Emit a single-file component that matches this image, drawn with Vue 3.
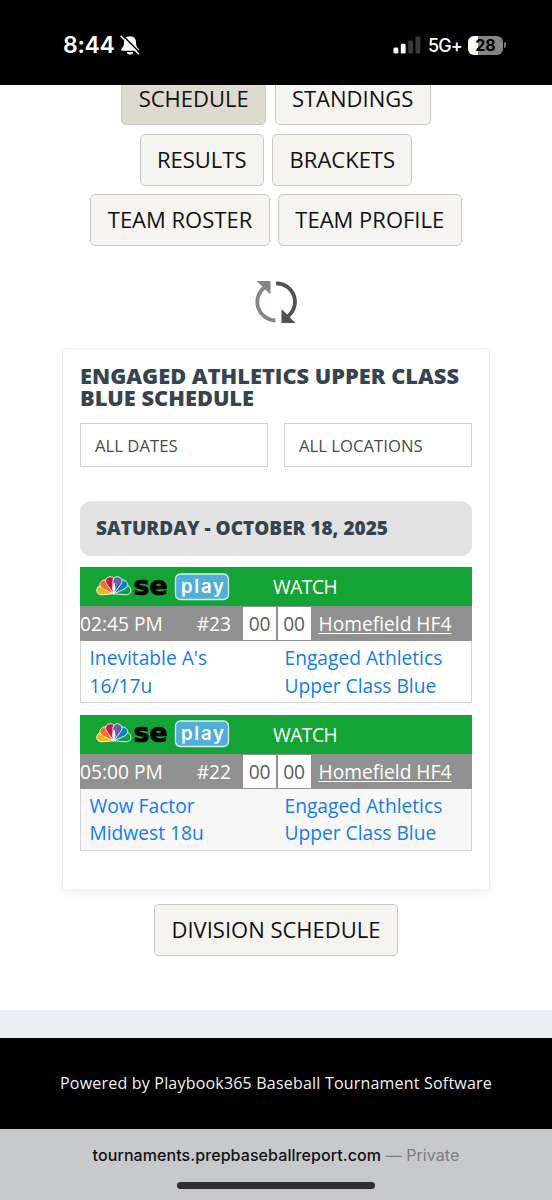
<script setup>
import { ref } from 'vue'

const navRows = ref([
  ['SCHEDULE', 'STANDINGS'],
  ['RESULTS', 'BRACKETS'],
  ['TEAM ROSTER', 'TEAM PROFILE']
])
const current = ref('SCHEDULE')

const games = ref([
  {
    time: '02:45 PM',
    number: '#23',
    score: ['00', '00'],
    field: 'Homefield HF4',
    away: ["Inevitable A's", '16/17u'],
    home: ['Engaged Athletics', 'Upper Class Blue']
  },
  {
    time: '05:00 PM',
    number: '#22',
    score: ['00', '00'],
    field: 'Homefield HF4',
    away: ['Wow Factor', 'Midwest 18u'],
    home: ['Engaged Athletics', 'Upper Class Blue']
  }
])

// peacock feathers, the outer ones are drawn first
const feathers = [
  { color: '#fbb413', angle: -74 },
  { color: '#0fa04b', angle: 74 },
  { color: '#f37021', angle: -45 },
  { color: '#0b80cb', angle: 45 },
  { color: '#ce1740', angle: -16 },
  { color: '#6460aa', angle: 16 }
]
</script>

<template>
  <div class="screen">
    <header class="status">
      <div class="clock">
        <span class="time">8:44</span>
        <svg class="bell" viewBox="0 0 20 20">
          <path d="M10 1.2C6 1.2 4 4 4 7.5C4 11.2 2.8 12.3 1.5 13.8C.6 15 1 15.8 2.4 15.8H17.6C19 15.8 19.4 15 18.5 13.8C17.2 12.3 16 11.2 16 7.5C16 4 14 1.2 10 1.2Z" fill="#fff" />
          <path d="M6.7 17H13.3C12.8 18.8 11.6 19.6 10 19.6S7.2 18.8 6.7 17Z" fill="#fff" />
          <path d="M2.2 0L20 17.8" stroke="#000" stroke-width="1.6" />
          <path d="M1 1.2L18.5 18.7" stroke="#fff" stroke-width="1.5" stroke-linecap="round" />
        </svg>
      </div>
      <div class="signals">
        <svg class="bars" viewBox="0 0 28 18">
          <rect x="0.5" y="11.5" width="4.8" height="6" rx="1.3" fill="#fff" />
          <rect x="7.8" y="7.8" width="4.8" height="9.7" rx="1.3" fill="#fff" />
          <rect x="15.2" y="4.5" width="4.8" height="13" rx="1.3" fill="#3a3a3a" />
          <rect x="22.5" y="0.5" width="4.8" height="17" rx="1.3" fill="#3a3a3a" />
        </svg>
        <span class="network">5G+</span>
        <div class="battery">28</div>
        <i class="battery-tip"></i>
      </div>
    </header>

    <main class="page">
      <nav class="nav">
        <div v-for="(row, index) in navRows" :key="index" class="nav-row">
          <button v-for="item in row" :key="item" :class="['btn', { active: item == current }]" @click="current = item">{{ item }}</button>
        </div>
      </nav>

      <svg class="refresh" viewBox="0 0 42 42">
        <path d="M20.5 39.5A18.5 18.5 0 0 1 10 6" fill="none" stroke="#85868c" stroke-width="3.8" />
        <path d="M1.5 0H15.5V13.5Z" fill="#85868c" />
        <path d="M21 2.3A18.5 18.5 0 0 1 32 36" fill="none" stroke="#515154" stroke-width="3.8" />
        <path d="M26.5 28V42H40.5Z" fill="#515154" />
      </svg>

      <section class="card">
        <h1>ENGAGED ATHLETICS UPPER CLASS<br>BLUE SCHEDULE</h1>
        <div class="filters">
          <div class="filter">ALL DATES</div>
          <div class="filter">ALL LOCATIONS</div>
        </div>
        <h2><span>SATURDAY - OCTOBER 18, 2025</span></h2>

        <article v-for="game in games" :key="game.number" class="game">
          <div class="watch">
            <svg class="logo" viewBox="0 0 136 30">
              <g transform="translate(16.8 21.8)">
                <path
                  v-for="f in feathers"
                  :key="f.color"
                  d="M0 0L-3.6 -9.5C-5.8 -14.5 -3.8 -17.5 0 -17.5S5.8 -14.500 3.6 -9.5Z"
                  :fill="f.color"
                  :transform="`rotate(${f.angle})`"
                  stroke="#fff"
                  stroke-width=".8"
                />
                <path d="M0 1.5L-1.600 -5L-.8 -10L1.5 -10.5L1.200 -9L1.600 -5Z" fill="#fff" />
              </g>
              <text class="se" x="36.5" y="23" textLength="34" lengthAdjust="spacingAndGlyphs">se</text>
              <rect x="78.5" y="2" width="53" height="25.5" rx="5" fill="#51aed8" stroke="#d9f1f5" stroke-width="1.3" />
              <text class="play" x="84" y="20.6" textLength="43">play</text>
            </svg>
            <span>WATCH</span>
          </div>
          <div class="info">
            <span class="game-time">{{ game.time }}</span>
            <span class="number">{{ game.number }}</span>
            <b v-for="(s, i) in game.score" :key="i" class="score">{{ s }}</b>
            <a class="field">{{ game.field }}</a>
          </div>
          <div class="teams">
            <a class="team"><span v-for="line in game.away" :key="line">{{ line }}</span></a>
            <a class="team"><span v-for="line in game.home" :key="line">{{ line }}</span></a>
          </div>
        </article>
      </section>

      <button class="btn division">DIVISION SCHEDULE</button>
    </main>

    <div class="strip"></div>
    <footer class="powered"><span>Powered by Playbook365 Baseball Tournament Software</span></footer>
    <div class="browser">
      <p><span class="url">tournaments.prepbaseballreport.com</span> <span class="private">— Private</span></p>
      <div class="home-bar"></div>
    </div>
  </div>
</template>

<style>
body {
  margin: 0;
  background: #fff;
}
</style>

<style scoped>
* {
  box-sizing: border-box;
}
.screen {
  width: 552px;
  height: 1200px;
  display: flex;
  flex-direction: column;
  overflow: hidden;
  background: #fff;
  font-family: 'Open Sans', sans-serif;
}
.status {
  height: 85px;
  flex: none;
  display: flex;
  justify-content: space-between;
  padding: 0 46px 0 63px;
  background: #000;
  color: #fff;
  font-family: Inter, sans-serif;
}
.clock,
.signals {
  display: flex;
  align-items: center;
  height: 90px;
}
.time {
  width: 57px;
  font-size: 23px;
  font-weight: 600;
  letter-spacing: -0.3px;
}
.bell {
  width: 20px;
  height: 20px;
}
.bars {
  width: 28px;
  height: 18px;
  margin-right: 7px;
}
.network {
  width: 40px;
  font-size: 18px;
  font-weight: 500;
  letter-spacing: -0.9px;
}
.battery {
  width: 35px;
  height: 19px;
  border-radius: 6px;
  background: linear-gradient(90deg, #fff 28%, #858585 28%);
  color: #000;
  font-size: 16px;
  font-weight: 700;
  line-height: 19px;
  text-align: center;
}
.battery-tip {
  width: 2px;
  height: 6px;
  margin-left: 1px;
  border-radius: 0 2px 2px 0;
  background: #777;
}
.page {
  height: 925px;
  flex: none;
  overflow: hidden;
  display: flex;
  flex-direction: column;
  align-items: center;
}
.nav {
  display: flex;
  flex-direction: column;
  gap: 8.5px;
  margin-top: -12px;
}
.nav-row {
  display: flex;
  justify-content: center;
  gap: 8.5px;
}
.btn {
  height: 52px;
  flex: none;
  padding: 0 16.3px 2px;
  border: 1.4px solid #cbc8c8;
  border-radius: 5px;
  background: #f6f4f1;
  color: #111;
  font: 400 22px 'Open Sans', sans-serif;
  white-space: nowrap;
}
.btn.active {
  background: #dfdad0;
}
.refresh {
  width: 42px;
  height: 42px;
  flex: none;
  margin-top: 35px;
}
.card {
  width: 428px;
  height: 543px;
  flex: none;
  margin-top: 25px;
  padding: 16px 17px 0;
  border: 1px solid #eeecee;
  border-radius: 4px;
  box-shadow: 0 5px 14px -5px #f0e9ee;
}
h1 {
  height: 44px;
  margin: 0;
  color: #36444f;
  font-size: 21.8px;
  font-weight: 800;
  line-height: 22px;
  white-space: nowrap;
}
.filters {
  display: flex;
  gap: 16px;
  margin-top: 14px;
}
.filter {
  width: 188px;
  height: 44px;
  padding-left: 14px;
  border: 1.4px solid #cdd0d4;
  color: #4b4a50;
  font-size: 16.7px;
  line-height: 43px;
}
h2 {
  height: 55px;
  margin: 34px 0 11px;
  padding-left: 16px;
  border-radius: 11px;
  background: #e3e3e3;
  color: #36444f;
  font-size: 19px;
  font-weight: 800;
  line-height: 55px;
}
.game {
  width: 392px;
  height: 136px;
  margin-bottom: 11.5px;
  font-size: 19.2px;
}
.watch {
  display: flex;
  align-items: center;
  height: 39px;
  background: #14a436;
  color: #fff;
}
.watch span {
  letter-spacing: -0.5px;
}
.logo {
  width: 136px;
  height: 30px;
  margin-left: 17px;
  margin-right: 40px;
  overflow: visible;
}
.se {
  font: 700 26px 'DejaVu Sans', sans-serif;
  fill: #000;
  stroke: #000;
  stroke-width: 0.7px;
}
.play {
  font: 600 18.5px Inter, sans-serif;
  fill: #fff;
}
.info {
  display: flex;
  align-items: center;
  height: 35px;
  background: #919191;
  color: #fff;
  white-space: nowrap;
}
.game-time {
  width: 91px;
}
.number {
  width: 60px;
  text-align: right;
}
.score {
  width: 33px;
  height: 33px;
  margin-left: 1.5px;
  background: #fff;
  color: #5b5b5b;
  font-weight: 500;
  letter-spacing: -0.2px;
  line-height: 33px;
  text-align: center;
}
.number + .score {
  margin-left: 12px;
}
.field {
  margin-left: 8px;
  text-decoration: underline;
  text-decoration-thickness: 1px;
  text-underline-offset: 2px;
}
.teams {
  display: flex;
  height: 62px;
  border: 1px solid #d3d4d7;
  border-top: 0;
  color: #127bf0;
}
.game:last-child .teams {
  background: #f7f7f7;
}
.team {
  width: 195px;
  padding: 3px 0 0 8.5px;
  line-height: 27.5px;
}
.team span {
  display: block;
  width: fit-content;
  white-space: nowrap;
}
.division {
  margin-top: 13px;
}
.strip {
  height: 28px;
  flex: none;
  background: #ecedf2;
}
.powered {
  height: 91px;
  flex: none;
  background: #000;
  color: #f2f2f2;
  font-size: 16px;
  letter-spacing: 0.2px;
  line-height: 90px;
  text-align: center;
}
.browser {
  height: 71px;
  flex: none;
  display: flex;
  flex-direction: column;
  align-items: center;
  background: #c8c9cd;
  font: 500 16px Inter, sans-serif;
  letter-spacing: 0.08px;
}
p {
  margin: 0;
  height: 53px;
  line-height: 53px;
  color: #111;
}
.private {
  color: #7c7d81;
  font-weight: 400;
}
.home-bar {
  width: 198px;
  height: 7px;
  border-radius: 4px;
  background: #2e2e2e;
}
</style>
